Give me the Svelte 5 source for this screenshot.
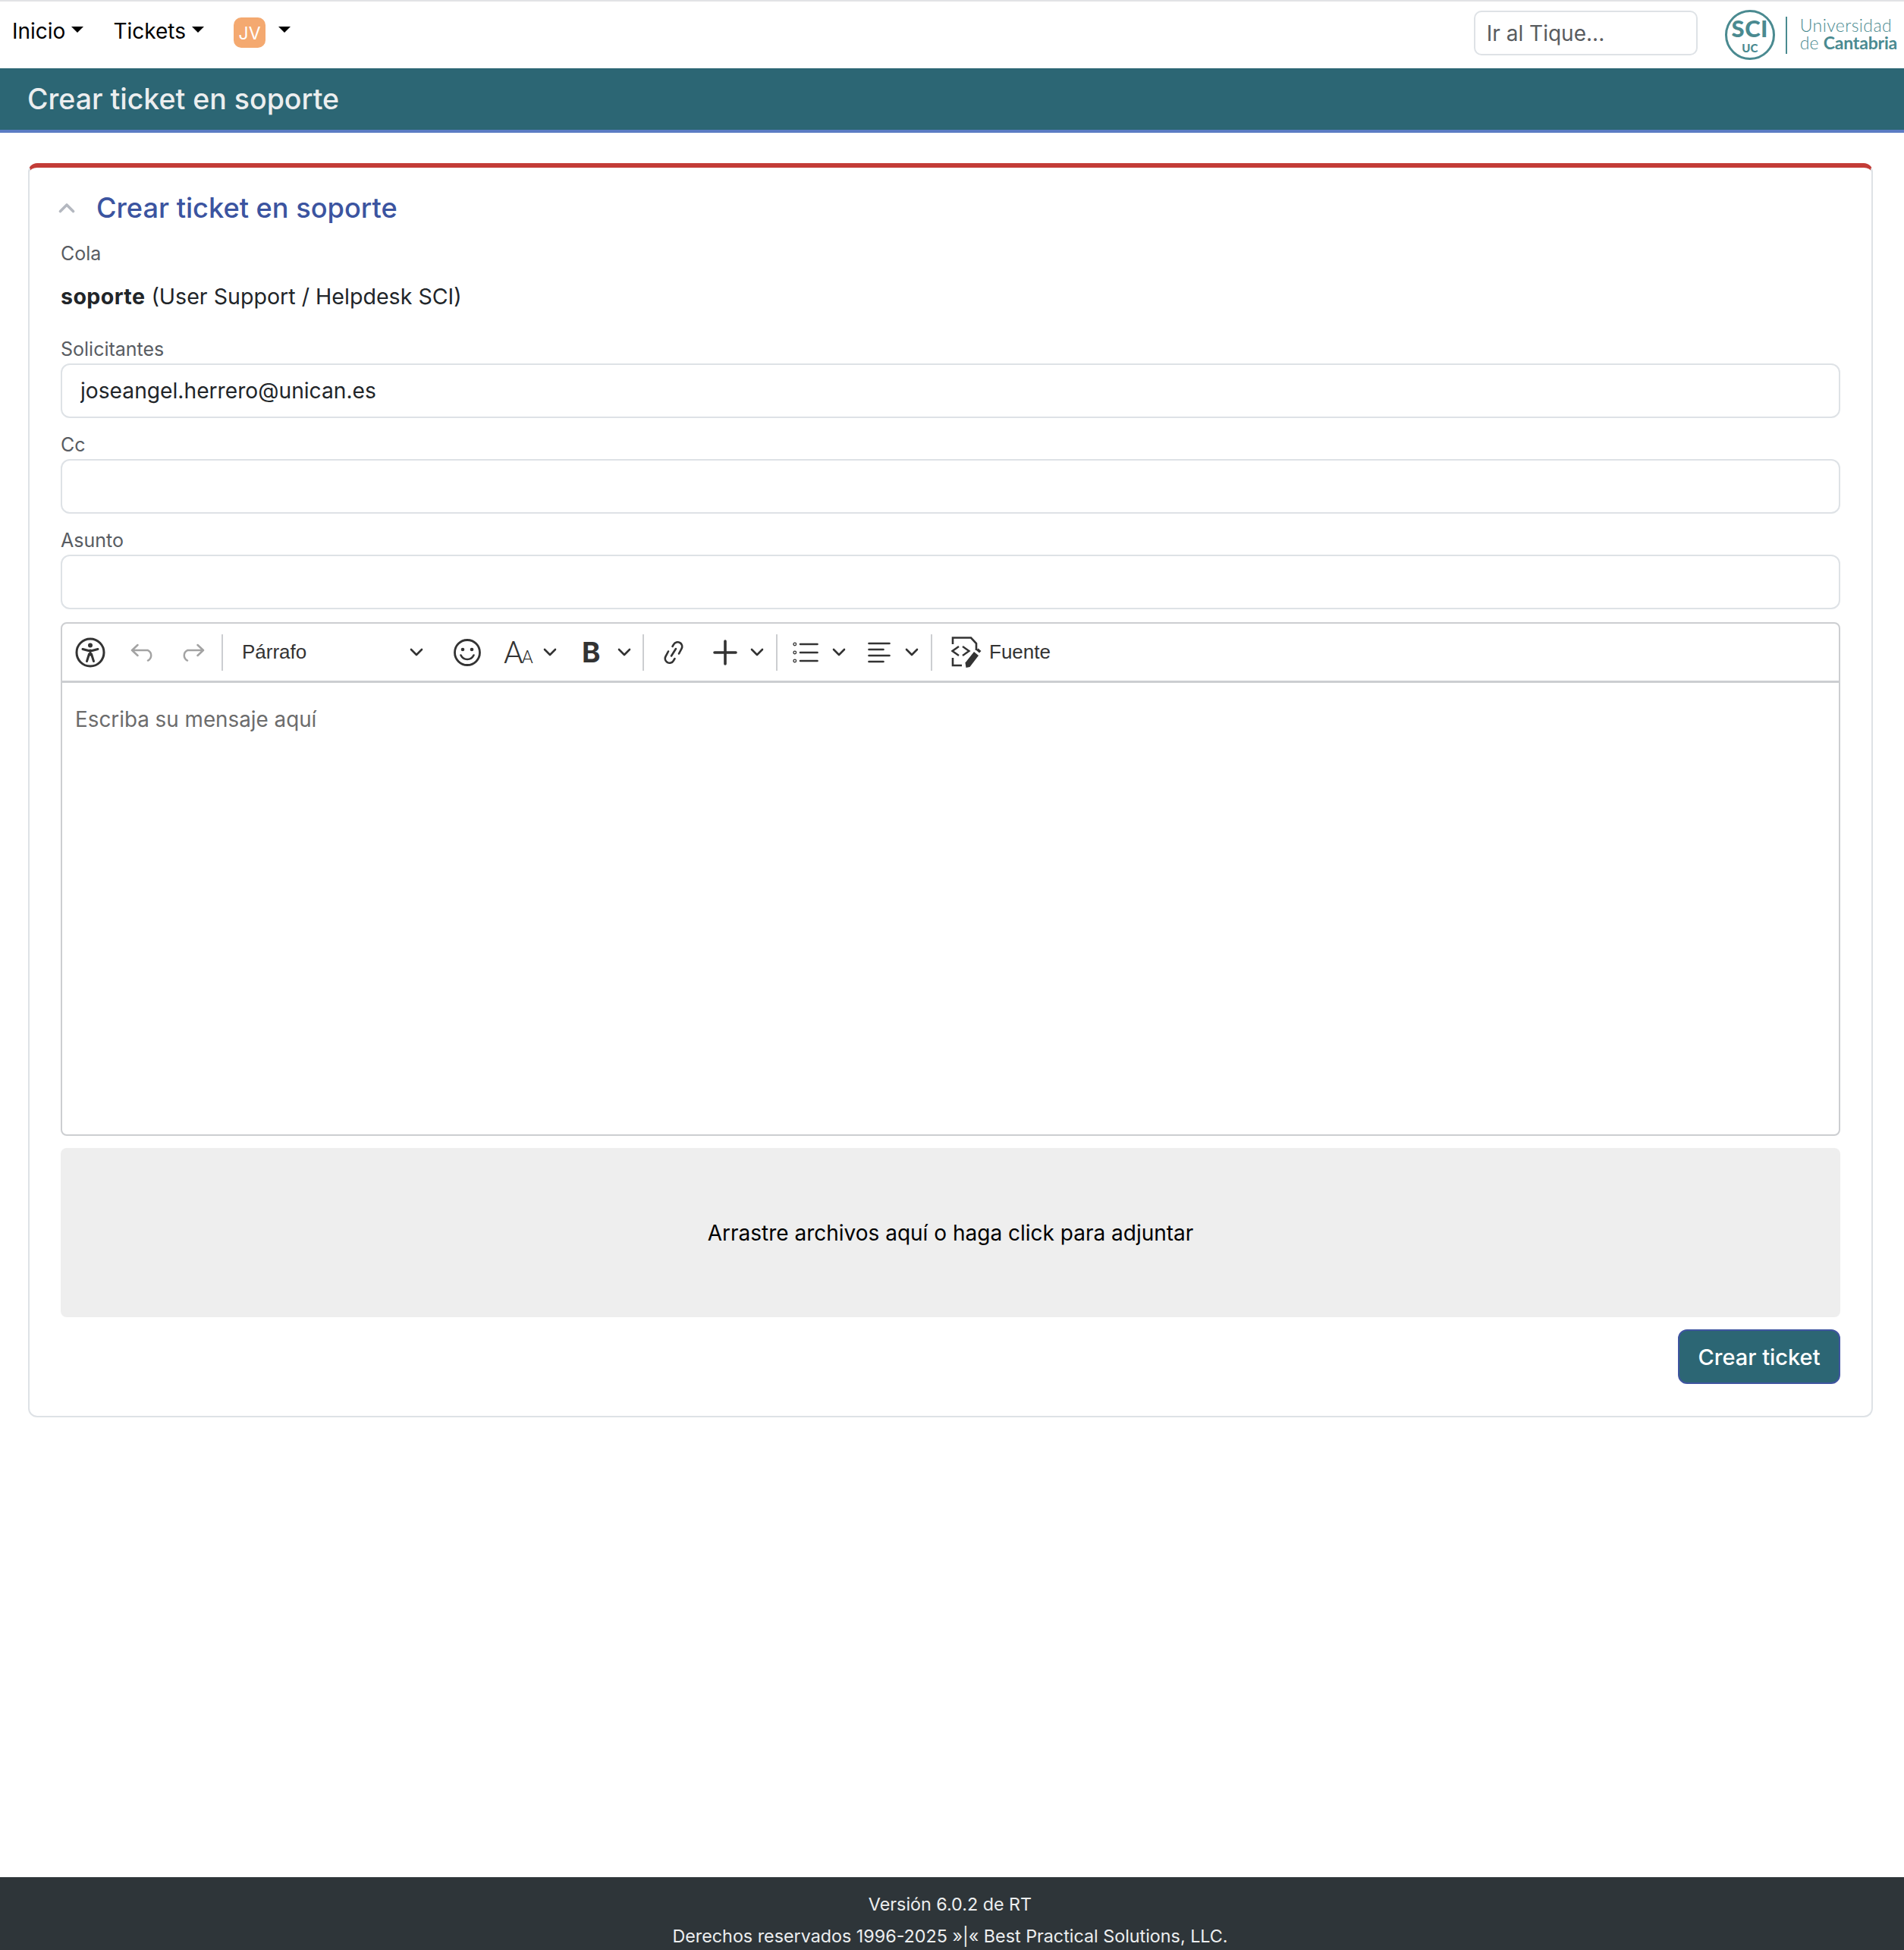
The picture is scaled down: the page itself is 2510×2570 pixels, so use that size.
<script>
  const fields = [
    { label: "Solicitantes", value: "joseangel.herrero@unican.es" },
    { label: "Cc", value: "" },
    { label: "Asunto", value: "" },
  ];
</script>

{#snippet chev(cls)}
  <svg class="chev {cls}" width="18" height="11" viewBox="0 0 18 11" fill="none" stroke="#333" stroke-width="2.6" stroke-linecap="round" stroke-linejoin="round"><path d="M2 2l7 7 7-7" /></svg>
{/snippet}

<div class="page">
  <nav class="nav">
    <a class="nav-link inicio">Inicio<span class="caret"></span></a>
    <a class="nav-link tickets">Tickets<span class="caret"></span></a>
    <span class="avatar">JV</span>
    <span class="caret user-caret"></span>
    <input class="jump" placeholder="Ir al Tique..." />
    <div class="logo">
      <div class="seal"><span class="sci">SCI</span><span class="uc">UC</span></div>
      <div class="logo-text"><span class="uni">Universidad</span><span>de <b>Cantabria</b></span></div>
    </div>
  </nav>

  <header class="title-bar"><h1>Crear ticket en soporte</h1></header>

  <main class="main">
    <section class="card">
      <div class="card-head">
        <svg width="22" height="14" viewBox="0 0 22 14" fill="none" stroke="#b4b8c0" stroke-width="3.6" stroke-linecap="round" stroke-linejoin="round"><path d="M2.5 11.5L11 3l8.500 8.500" /></svg>
        <h2>Crear ticket en soporte</h2>
      </div>

      <label class="label cola">Cola</label>
      <p class="queue"><b>soporte</b> (User Support / Helpdesk SCI)</p>

      {#each fields as f, i}
        <label class="label" class:first={i === 0}>{f.label}</label>
        <input class="control" value={f.value} />
      {/each}

      <div class="editor">
        <div class="toolbar">
          <svg class="t-acc" width="40" height="40" viewBox="0 0 40 40" fill="none" stroke="#333" stroke-linecap="round" stroke-linejoin="round">
            <circle cx="20" cy="20" r="18" stroke-width="3" />
            <circle cx="20" cy="10.500" r="3" fill="#333" stroke="none" />
            <path d="M10 15.500l7.500 2h5l7.500-2" stroke-width="3" />
            <path d="M20 17v6M18.500 22L15.500 31.500M21.500 22l3 9.500" stroke-width="3" />
          </svg>
          <svg class="t-undo" width="33" height="24" viewBox="0 0 33 24" fill="none" stroke="#a3a3a3" stroke-width="2.500" stroke-linecap="round" stroke-linejoin="round"><path d="M9.500 2L2 9l7.500 7M2 9h21a7.500 7.500 0 0 1 0 13.500" /></svg>
          <svg class="t-redo" width="33" height="24" viewBox="0 0 33 24" fill="none" stroke="#a3a3a3" stroke-width="2.500" stroke-linecap="round" stroke-linejoin="round"><path d="M23.500 2L31 9l-7.500 7M31 9H10a7.500 7.500 0 0 0 0 13.500" /></svg>
          <span class="sep s1"></span>
          <span class="heading">Párrafo</span>
          {@render chev("c-heading")}
          <svg class="t-emoji" width="38" height="38" viewBox="0 0 38 38" fill="none" stroke="#333" stroke-linecap="round">
            <circle cx="19" cy="19" r="16.500" stroke-width="2.800" />
            <circle cx="13" cy="15" r="2.300" fill="#333" stroke="none" />
            <circle cx="25" cy="15" r="2.300" fill="#333" stroke="none" />
            <path d="M10.500 22.500c2 4 5 5.500 8.500 5.500s6.500-1.500 8.500-5.500" stroke-width="2.600" />
          </svg>
          <span class="font-size"><span class="big">A</span><span class="small">A</span></span>
          {@render chev("c-size")}
          <span class="bold">B</span>
          {@render chev("c-bold")}
          <span class="sep s2"></span>
          <svg class="t-link" width="30" height="34" viewBox="0 0 30 34" fill="none" stroke="#333" stroke-width="2.600" stroke-linecap="round">
            <path d="M8 15.500L4.500 22a5.800 5.800 0 0 0 2.300 8 5.800 5.800 0 0 0 8-2.200L16.500 25" />
            <path d="M22 18.500l3.500-6.500a5.800 5.800 0 0 0-2.300-8 5.800 5.800 0 0 0-8 2.200L13.500 9" />
            <path d="M12 21.500l6-9.500" />
          </svg>
          <svg class="t-plus" width="32" height="34" viewBox="0 0 32 34" fill="none" stroke="#333" stroke-width="3.600" stroke-linecap="round"><path d="M16 2v30M2 17h28" /></svg>
          {@render chev("c-plus")}
          <span class="sep s3"></span>
          <svg class="t-list" width="34" height="30" viewBox="0 0 34 30" fill="none" stroke="#333" stroke-linecap="round">
            <circle cx="2.800" cy="4" r="1.800" stroke-width="1.300" />
            <circle cx="2.800" cy="15" r="1.800" stroke-width="1.300" />
            <circle cx="2.800" cy="26" r="1.800" stroke-width="1.300" />
            <path d="M10 4h22.500M10 15h22.500M10 26h22.500" stroke-width="2.600" />
          </svg>
          {@render chev("c-list")}
          <svg class="t-align" width="30" height="30" viewBox="0 0 30 30" fill="none" stroke="#333" stroke-width="2.600" stroke-linecap="round"><path d="M1.500 3h27M1.500 11h19M1.500 19h27M1.500 27h19" /></svg>
          {@render chev("c-align")}
          <span class="sep s4"></span>
          <svg class="t-source" width="40" height="42" viewBox="0 0 40 42" fill="none" stroke="#333" stroke-width="2.600">
            <path d="M2 10V1.500H26L33 9v9M2 28v10h12" />
            <path d="M10 13L1.500 19l8.500 6M15 13l8.500 6-8.500 6" stroke-width="2.400" />
            <path d="M19.500 41l-1-6.500L30 20l6 5L24.500 40z" fill="#333" stroke="none" />
            <path d="M33 18l2.500-2.500 4 3.500-2.500 2.500z" fill="#333" stroke="none" />
          </svg>
          <span class="source">Fuente</span>
        </div>
        <div class="editable">Escriba su mensaje aquí</div>
      </div>

      <div class="dropzone">Arrastre archivos aquí o haga click para adjuntar</div>

      <div class="actions"><button class="submit">Crear ticket</button></div>
    </section>
  </main>

  <footer class="footer">
    <p>Versión 6.0.2 de RT</p>
    <p>Derechos reservados 1996-2025 »|« Best Practical Solutions, LLC.</p>
  </footer>
</div>

<style>
  :global(body) {
    margin: 0;
    background: #fff;
    font-family: Inter, "Liberation Sans", sans-serif;
    color: #212529;
  }

  .page {
    display: flex;
    flex-direction: column;
    height: 2570px;
    overflow: hidden;
  }

  .nav {
    display: flex;
    align-items: flex-start;
    height: 88px;
    border-top: 2px solid #e2e3e5;
    flex: none;
  }

  .nav-link {
    display: flex;
    align-items: center;
    font-size: 28px;
    line-height: 38px;
    color: #000;
    margin-top: 20px;
  }

  .inicio { margin-left: 16px; }
  .tickets { margin-left: 39px; }

  .caret {
    display: inline-block;
    width: 0;
    height: 0;
    margin-left: 8px;
    margin-bottom: 5px;
    border-top: 8px solid #000;
    border-left: 8px solid transparent;
    border-right: 8px solid transparent;
  }

  .avatar {
    width: 42px;
    height: 40px;
    margin: 21px 0 0 39px;
    border-radius: 10px;
    background: #f4a970;
    color: #fff;
    font-size: 23px;
    line-height: 42px;
    text-align: center;
  }

  .user-caret {
    margin: 33px 0 0 17px;
  }

  .jump {
    box-sizing: border-box;
    width: 295px;
    height: 59px;
    margin: 12px 0 0 auto;
    padding: 0 15px;
    border: 2px solid #dee2e6;
    border-radius: 10px;
    font: 400 28px Inter, sans-serif;
    outline: none;
  }

  .jump::placeholder { color: #595c5f; opacity: 1; }

  .logo {
    display: flex;
    align-items: center;
    margin: 11px 9px 0 36px;
    color: #4a8a90;
  }

  .seal {
    box-sizing: border-box;
    width: 66px;
    height: 66px;
    border: 3px solid #4a8a90;
    border-radius: 50%;
    display: flex;
    flex-direction: column;
    align-items: center;
    font-family: Lato, sans-serif;
    font-weight: 900;
  }

  .sci { font-size: 31px; line-height: 36px; margin-top: 3px; letter-spacing: 0.5px; }
  .uc { font-size: 15px; line-height: 17px; }

  .logo-text {
    display: flex;
    flex-direction: column;
    margin-left: 14px;
    padding-left: 17px;
    border-left: 2px solid #4a8a90;
    height: 49px;
    font-family: Lato, sans-serif;
    font-size: 23px;
    line-height: 23px;
    font-weight: 300;
    white-space: nowrap;
  }

  .uni { letter-spacing: 0.4px; }
  .logo-text b { font-weight: 700; letter-spacing: -0.2px; }

  .title-bar {
    flex: none;
    height: 81px;
    background: #2c6674;
    border-bottom: 4px solid #5b7cc4;
    display: flex;
    align-items: center;
    padding-left: 36px;
  }

  h1 {
    margin: 0;
    font-size: 37.500px;
    font-weight: 500;
    color: #eceeef;
  }

  .main {
    flex: 1;
    padding: 40px 41px 0 37px;
  }

  .card {
    border: 2px solid #dee2e6;
    border-top: 6px solid #c33c37;
    border-radius: 12px;
    padding: 30px 41px 42px;
  }

  .card-head {
    display: flex;
    align-items: center;
    height: 46px;
    margin-left: -3px;
  }

  .card-head h2 {
    margin: 0 0 0 28px;
    font-size: 36.200px;
    font-weight: 500;
    line-height: 46px;
    color: #3b54a0;
  }

  .label {
    display: block;
    font-size: 25px;
    line-height: 30px;
    color: #585c62;
    margin: 20px 0 4px;
  }

  .label.cola { margin: 22px 0 0; }
  .label.first { margin-top: 34px; }

  .queue {
    margin: 22px 0 0;
    font-size: 28.600px;
    line-height: 40px;
  }

  .queue b { font-weight: 700; letter-spacing: 0.4px; }

  .control {
    box-sizing: border-box;
    display: block;
    width: 100%;
    height: 72px;
    padding: 0 24px;
    border: 2px solid #dee2e6;
    border-radius: 12px;
    font: 400 28.200px Inter, sans-serif;
    color: #212529;
    outline: none;
  }

  .editor {
    box-sizing: border-box;
    height: 677px;
    margin-top: 17px;
    border: 2px solid #ccced1;
    border-radius: 8px;
  }

  .toolbar {
    display: flex;
    align-items: center;
    height: 75px;
    border-bottom: 3px solid #ccced1;
    padding-left: 17px;
    color: #333;
    font-family: "Liberation Sans", sans-serif;
  }

  .toolbar svg { flex: none; }

  .sep {
    flex: none;
    width: 2px;
    height: 48px;
    background: #ccced1;
  }

  .t-undo { margin-left: 33px; }
  .t-redo { margin-left: 32px; }
  .s1 { margin-left: 22px; }
  .heading { margin-left: 25px; width: 221px; font-size: 26px; flex: none; }
  .t-emoji { margin-left: 39px; }
  .font-size { margin-left: 29px; width: 40px; flex: none; white-space: nowrap; font-family: Roboto, sans-serif; font-weight: 300; }
  .big { font-size: 41px; letter-spacing: -2px; }
  .small { font-size: 24px; }
  .c-size { margin-left: 12px; }
  .bold { margin-left: 33px; width: 26px; flex: none; font-size: 37px; font-weight: 700; font-family: Inter, sans-serif; }
  .c-bold { margin-left: 21px; }
  .s2 { margin-left: 15px; }
  .t-link { margin-left: 24px; }
  .t-plus { margin-left: 37px; }
  .c-plus { margin-left: 17px; }
  .s3 { margin-left: 16px; }
  .t-list { margin-left: 20px; }
  .c-list { margin-left: 18px; }
  .t-align { margin-left: 29px; }
  .c-align { margin-left: 19px; }
  .s4 { margin-left: 16px; }
  .t-source { margin-left: 25px; }
  .source { margin-left: 10px; font-size: 26px; }

  .editable {
    padding: 28px 17px;
    font-size: 27.800px;
    line-height: 40px;
    color: #6c6c6c;
  }

  .dropzone {
    height: 223px;
    margin-top: 16px;
    border-radius: 8px;
    background: #eee;
    color: #000;
    font-size: 28px;
    display: flex;
    align-items: center;
    justify-content: center;
  }

  .actions {
    display: flex;
    justify-content: flex-end;
    margin-top: 16px;
  }

  .submit {
    box-sizing: border-box;
    width: 214px;
    height: 72px;
    border: 2px solid #3f55a0;
    border-radius: 12px;
    background: #2c6674;
    color: #fff;
    font: 500 29px Inter, sans-serif;
  }

  .footer {
    flex: none;
    height: 96px;
    padding-right: 5px;
    background: #2e3539;
    color: #eceeef;
    font-size: 23.300px;
    text-align: center;
  }

  .footer p {
    margin: 0;
    line-height: 42px;
  }

  .footer p:first-child { margin-top: 15px; }
</style>
